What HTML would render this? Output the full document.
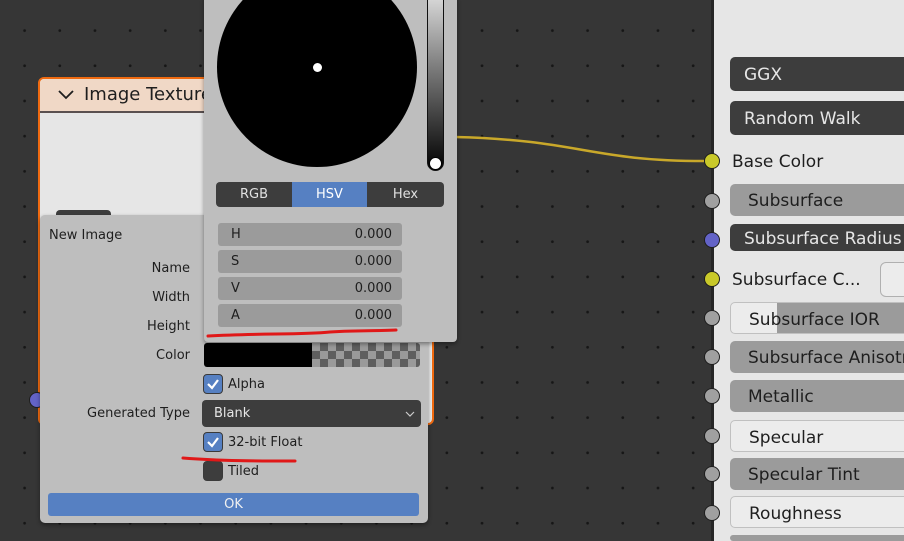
<!DOCTYPE html>
<html style="width:904px;height:541px;overflow:hidden"><head><meta charset="utf-8"><style>
*{margin:0;padding:0;box-sizing:border-box}
body{width:904px;height:541px;overflow:hidden;position:relative;background:#363636;font-family:"DejaVu Sans","Liberation Sans",sans-serif;}
.grid{position:absolute;inset:0;background-image:radial-gradient(circle,#161616 1.2px,transparent 1.6px);background-size:35.2px 35.2px;background-position:7px 13px}
.a{position:absolute}
.lbl{position:absolute;font-size:13px;color:#1e1e1e;white-space:nowrap}
.fld{position:absolute;background:#9b9b9b;border-radius:3px;font-size:13px;color:#1e1e1e}
.cb{position:absolute;width:20px;height:20px;border-radius:4px;background:#5680c2;border:1px solid #3a3a3a}
.row{position:absolute;left:730px;width:190px;height:32px;border-radius:5px;font-size:17px;padding-left:18px;line-height:34px;color:#1e1e1e;white-space:nowrap;overflow:hidden}
.sock{position:absolute;width:16px;height:16px;border-radius:50%;border:1.5px solid #1e1e1e;background:#a0a0a0}
</style></head><body>
<div class="grid"></div>

<!-- right node -->
<div class="a" style="left:711px;top:0;width:200px;height:541px;background:#e6e6e6;border-left:3px solid #262626"></div>
<div class="row" style="top:57px;height:34px;line-height:36px;background:#3d3d3d;color:#e6e6e6;padding-left:14px">GGX</div>
<div class="row" style="top:101px;height:34px;line-height:36px;background:#3d3d3d;color:#e6e6e6;padding-left:14px">Random Walk</div>
<div class="a" style="left:732px;top:152px;font-size:17px;color:#1e1e1e">Base Color</div>
<div class="row" style="top:184px;background:#9b9b9b">Subsurface</div>
<div class="row" style="top:224px;height:27px;line-height:31px;background:#3d3d3d;color:#e6e6e6;padding-left:14px">Subsurface Radius</div>
<div class="a" style="left:732px;top:270px;font-size:17px;color:#1e1e1e">Subsurface C...</div>
<div class="a" style="left:880px;top:262px;width:40px;height:35px;border:1.5px solid #b0b0b0;border-radius:6px;background:#ececec"></div>
<div class="row" style="top:302px;background:linear-gradient(90deg,#ececec 46px,#9b9b9b 46px);border:1px solid #c0c0c0">Subsurface IOR</div>
<div class="row" style="top:341px;background:#9b9b9b">Subsurface Anisotropy</div>
<div class="row" style="top:380px;background:#9b9b9b">Metallic</div>
<div class="row" style="top:420px;background:#ececec;border:1px solid #c0c0c0">Specular</div>
<div class="row" style="top:458px;background:#9b9b9b">Specular Tint</div>
<div class="row" style="top:496px;background:#ececec;border:1px solid #c0c0c0">Roughness</div>
<div class="row" style="top:535px;height:6px;background:#9b9b9b"></div>
<div class="sock" style="left:704px;top:153px;background:#c9c92a"></div>
<div class="sock" style="left:704px;top:193px"></div>
<div class="sock" style="left:704px;top:232px;background:#6363c7"></div>
<div class="sock" style="left:704px;top:271px;background:#c9c92a"></div>
<div class="sock" style="left:704px;top:310px"></div>
<div class="sock" style="left:704px;top:349px"></div>
<div class="sock" style="left:704px;top:388px"></div>
<div class="sock" style="left:704px;top:428px"></div>
<div class="sock" style="left:704px;top:466px"></div>
<div class="sock" style="left:704px;top:505px"></div>

<svg class="a" style="left:0;top:0" width="904" height="541"><path d="M455 137 C580 140 590 161 704 161" stroke="#c9a82a" stroke-width="2.5" fill="none"/></svg>

<!-- image texture node -->
<div class="a" style="left:38px;top:77px;width:396px;height:348px;border:2px solid #f06a10;border-radius:6px;background:#e6e6e6;overflow:hidden">
 <div style="height:34px;background:#f0d8c6;border-bottom:2px solid #5a5050;font-size:18px;color:#1e1e1e;line-height:32px;padding-left:44px">Image Texture</div>
</div>
<svg class="a" style="left:57px;top:87px" width="18" height="14"><path d="M2 4 L9 11 L16 4" stroke="#1e1e1e" stroke-width="1.8" fill="none"/></svg>
<div class="a" style="left:56px;top:210px;width:55px;height:8px;background:#3d3d3d;border-radius:4px 4px 0 0"></div>
<div class="a" style="left:29px;top:392px;width:16px;height:16px;border-radius:50%;background:#6363c7;border:1.5px solid #1e1e1e"></div>

<!-- new image dialog -->
<div class="a" style="left:40px;top:215px;width:388px;height:308px;background:#bebebe;border-radius:5px;box-shadow:0 2px 4px rgba(0,0,0,.4)"></div>
<div class="lbl" style="left:49px;top:228px">New Image</div>
<div class="lbl" style="left:60px;width:130px;text-align:right;top:261px">Name</div>
<div class="lbl" style="left:60px;width:130px;text-align:right;top:290px">Width</div>
<div class="lbl" style="left:60px;width:130px;text-align:right;top:319px">Height</div>
<div class="lbl" style="left:60px;width:130px;text-align:right;top:348px">Color</div>
<div class="lbl" style="left:60px;width:130px;text-align:right;top:406px">Generated Type</div>
<div class="a" style="left:204px;top:343px;width:108px;height:24px;background:#000;border-radius:3px 0 0 3px"></div>
<div class="a" style="left:312px;top:343px;width:108px;height:24px;border-radius:0 3px 3px 0;background-color:#9a9a9a;background-image:linear-gradient(45deg,#5e5e5e 25%,transparent 25%,transparent 75%,#5e5e5e 75%),linear-gradient(45deg,#5e5e5e 25%,transparent 25%,transparent 75%,#5e5e5e 75%);background-size:16px 16px;background-position:0 0,8px 8px"></div>
<div class="cb" style="left:203px;top:374px"></div>
<svg class="a" style="left:203px;top:374px" width="20" height="20"><path d="M5 10 L9 14 L15 6" stroke="#fff" stroke-width="2.2" fill="none"/></svg>
<div class="lbl" style="left:228px;top:377px">Alpha</div>
<div class="a" style="left:202px;top:400px;width:219px;height:27px;background:#3d3d3d;border-radius:4px;color:#e6e6e6;font-size:13px;line-height:28px;padding-left:12px">Blank</div>
<svg class="a" style="left:404px;top:409px" width="12" height="10"><path d="M2 3 L6 7 L10 3" stroke="#ccc" stroke-width="1.2" fill="none"/></svg>
<div class="cb" style="left:203px;top:432px"></div>
<svg class="a" style="left:203px;top:432px" width="20" height="20"><path d="M5 10 L9 14 L15 6" stroke="#fff" stroke-width="2.2" fill="none"/></svg>
<div class="lbl" style="left:228px;top:435px">32-bit Float</div>
<div class="cb" style="left:203px;top:461px;background:#3d3d3d"></div>
<div class="lbl" style="left:228px;top:464px">Tiled</div>
<div class="a" style="left:48px;top:493px;width:371px;height:23px;background:#5680c2;border-radius:3px;color:#f0f0f0;font-size:13px;text-align:center;line-height:24px">OK</div>

<!-- color picker -->
<div class="a" style="left:204px;top:-5px;width:253px;height:347px;background:#bebebe;border-radius:4px;box-shadow:0 2px 4px rgba(0,0,0,.4)"></div>
<div class="a" style="left:217px;top:-33px;width:200px;height:200px;border-radius:50%;background:#000"></div>
<div class="a" style="left:313px;top:63px;width:9px;height:9px;border-radius:50%;background:#fff"></div>
<div class="a" style="left:427px;top:-10px;width:17px;height:181px;border-radius:0 0 9px 9px;border:1.5px solid #111;background:linear-gradient(#e0e0e0,#777 45%,#000)"></div>
<div class="a" style="left:429px;top:157px;width:13px;height:13px;border-radius:50%;background:#fff;border:1px solid #000"></div>
<div class="a" style="left:216px;top:182px;width:228px;height:25px;background:#3d3d3d;border-radius:4px;overflow:hidden;font-size:13px;color:#e0e0e0;line-height:25px;display:flex">
 <div style="width:76px;text-align:center">RGB</div><div style="width:75px;text-align:center;background:#5680c2;color:#fff">HSV</div><div style="width:77px;text-align:center">Hex</div>
</div>
<div class="fld" style="left:218px;top:223px;width:184px;height:23px;line-height:24px"><span style="position:absolute;left:13px">H</span><span style="position:absolute;right:10px">0.000</span></div>
<div class="fld" style="left:218px;top:250px;width:184px;height:23px;line-height:24px"><span style="position:absolute;left:13px">S</span><span style="position:absolute;right:10px">0.000</span></div>
<div class="fld" style="left:218px;top:277px;width:184px;height:23px;line-height:24px"><span style="position:absolute;left:13px">V</span><span style="position:absolute;right:10px">0.000</span></div>
<div class="fld" style="left:218px;top:304px;width:184px;height:23px;line-height:24px"><span style="position:absolute;left:13px">A</span><span style="position:absolute;right:10px">0.000</span></div>

<svg class="a" style="left:0;top:0" width="904" height="541"><path d="M208 336 C260 333 300 335 330 332 C360 330 380 331 396 330" stroke="#e01818" stroke-width="3" fill="none" stroke-linecap="round"/><path d="M183 458 C220 461 260 461 295 461" stroke="#e01818" stroke-width="3" fill="none" stroke-linecap="round"/></svg>
</body></html>
